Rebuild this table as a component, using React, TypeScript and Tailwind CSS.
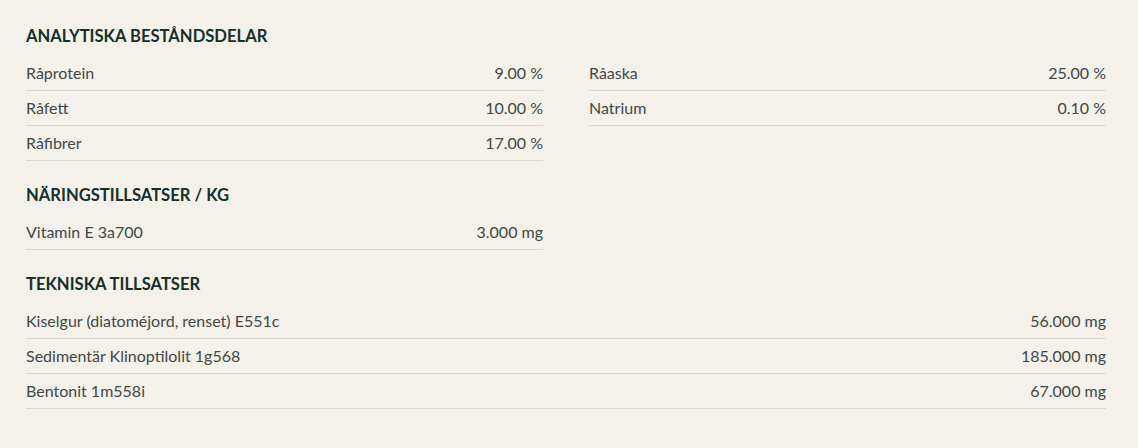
import React from "react";

type Row = [string, string];

const Item = ({ label, value }: { label: string; value: string }) => (
  <div className="flex h-[35px] items-center justify-between border-b border-[#dcd9d1] text-[16px] text-[#414847]">
    <span>{label}</span>
    <span>{value}</span>
  </div>
);

const Heading = ({ children }: { children: React.ReactNode }) => (
  <h3 className="mb-[8px] h-[24px] text-[16.6px] font-bold leading-[24px] text-[#15302a]">{children}</h3>
);

export default function App() {
  const left: Row[] = [
    ["Råprotein", "9.00 %"],
    ["Råfett", "10.00 %"],
    ["Råfibrer", "17.00 %"],
  ];
  const right: Row[] = [
    ["Råaska", "25.00 %"],
    ["Natrium", "0.10 %"],
  ];
  const tech: Row[] = [
    ["Kiselgur (diatoméjord, renset) E551c", "56.000 mg"],
    ["Sedimentär Klinoptilolit 1g568", "185.000 mg"],
    ["Bentonit 1m558i", "67.000 mg"],
  ];
  return (
    <div
      className="min-h-[448px] w-full bg-[#f4f1ea] pl-[26px] pr-[32px] pt-[24px]"
      style={{ fontFamily: "Lato, 'Noto Sans', sans-serif" }}
    >
      <Heading>ANALYTISKA BESTÅNDSDELAR</Heading>
      <div className="grid grid-cols-2 gap-x-[46px]">
        <div>
          {left.map(([l, v]) => (
            <Item key={l} label={l} value={v} />
          ))}
        </div>
        <div>
          {right.map(([l, v]) => (
            <Item key={l} label={l} value={v} />
          ))}
        </div>
      </div>
      <div className="mt-[22px]">
        <Heading>NÄRINGSTILLSATSER / KG</Heading>
        <div className="grid grid-cols-2 gap-x-[46px]">
          <div>
            <Item label="Vitamin E 3a700" value="3.000 mg" />
          </div>
        </div>
      </div>
      <div className="mt-[22px]">
        <Heading>TEKNISKA TILLSATSER</Heading>
        {tech.map(([l, v]) => (
          <Item key={l} label={l} value={v} />
        ))}
      </div>
    </div>
  );
}
